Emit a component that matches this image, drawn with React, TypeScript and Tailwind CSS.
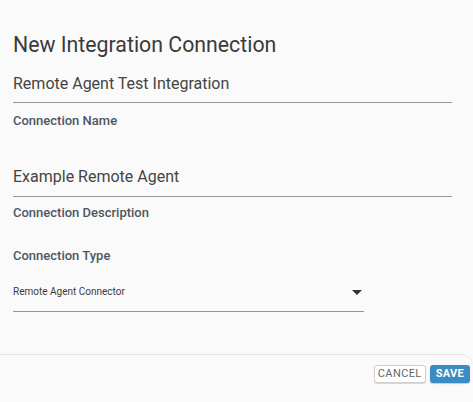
export default function App() {
  return (
    <div className="h-[402px] w-[473px] bg-[#fafafa] font-['Roboto',sans-serif] flex flex-col">
      <div className="flex-1 px-[13px] pt-[33px]">
        <h2 className="text-[21.3px] leading-[24px] text-[#3a3a3a]">New Integration Connection</h2>

        <div className="mt-[15px] w-[439px]">
          <div className="h-[31px] border-b border-[#949494] text-[16px] leading-[24px] text-[#444]">
            Remote Agent Test Integration
          </div>
          <div className="mt-[10px] text-[13px] font-medium leading-[16px] text-[#4f5661]">Connection Name</div>
        </div>

        <div className="mt-[36px] w-[439px]">
          <div className="h-[32px] border-b border-[#949494] text-[16px] leading-[24px] text-[#444]">
            Example Remote Agent
          </div>
          <div className="mt-[8px] text-[13px] font-medium leading-[16px] text-[#4f5661]">Connection Description</div>
        </div>

        <div className="mt-[27px] text-[13px] font-medium leading-[16px] text-[#4f5661]">Connection Type</div>

        <div className="mt-[21px] flex h-[27px] w-[351px] items-start justify-between border-b border-[#949494]">
          <span className="text-[10px] leading-[14px] text-[#3c3c3c]">Remote Agent Connector</span>
          <svg viewBox="0 0 10 5" className="mr-[2px] mt-[5px] h-[5px] w-[10px] fill-[#333]">
            <path d="M0 0h10L5 5z" />
          </svg>
        </div>
      </div>

      <div className="flex h-[48px] items-start justify-end gap-[4px] rounded-tr-[12px] border-t border-[#e3e3e3] pr-[3px] pt-[10px]">
        <button className="h-[18px] rounded-[3px] border border-[#cfcfcf] bg-white px-[3px] text-[11px] leading-[16px] tracking-[0.4px] text-[#666] shadow-[0_1px_1px_rgba(0,0,0,0.15)]">
          CANCEL
        </button>
        <button className="h-[18px] rounded-[3px] bg-[#3a8cc4] px-[6px] text-[11px] font-bold leading-[18px] tracking-[0.3px] text-white shadow-[0_1px_1px_rgba(0,0,0,0.2)]">
          SAVE
        </button>
      </div>
    </div>
  )
}
